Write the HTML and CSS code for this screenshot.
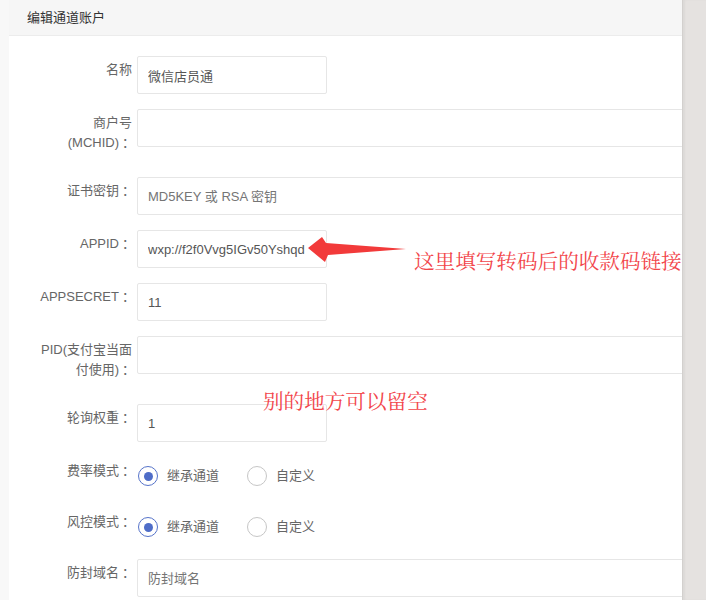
FILE: index.html
```html
<!DOCTYPE html>
<html lang="zh-CN">
<head>
<meta charset="utf-8">
<title>编辑通道账户</title>
<link rel="stylesheet" href="styles.css">
</head>
<body>
<div class="page">
  <div class="strip"></div>
  <div class="panel">
    <div class="panel-head">编辑通道账户</div>
    <form class="form">
      <div class="row">
        <label class="label">名称</label>
        <input class="input short" type="text" value="微信店员通">
      </div>
      <div class="row">
        <label class="label"><span>商户号</span> <span>(MCHID)<span class="colon">：</span></span></label>
        <input class="input wide" type="text" value="">
      </div>
      <div class="row">
        <label class="label">证书密钥<span class="colon">：</span></label>
        <input class="input wide" type="text" placeholder="MD5KEY 或 RSA 密钥">
      </div>
      <div class="row">
        <label class="label">APPID<span class="colon">：</span></label>
        <input class="input short" type="text" value="wxp://f2f0Vvg5IGv50Yshqd">
      </div>
      <div class="row">
        <label class="label">APPSECRET<span class="colon">：</span></label>
        <input class="input short" type="text" value="11">
      </div>
      <div class="row">
        <label class="label"><span>PID(支付宝当面</span><span>付使用)<span class="colon">：</span></span></label>
        <input class="input wide" type="text" value="">
      </div>
      <div class="row">
        <label class="label">轮询权重<span class="colon">：</span></label>
        <input class="input short" type="text" value="1">
      </div>
      <div class="row">
        <label class="label">费率模式<span class="colon">：</span></label>
        <div class="radios">
          <span class="radio on"></span><span class="radio-text">继承通道</span>
          <span class="radio"></span><span class="radio-text">自定义</span>
        </div>
      </div>
      <div class="row">
        <label class="label">风控模式<span class="colon">：</span></label>
        <div class="radios">
          <span class="radio on"></span><span class="radio-text">继承通道</span>
          <span class="radio"></span><span class="radio-text">自定义</span>
        </div>
      </div>
      <div class="row">
        <label class="label">防封域名<span class="colon">：</span></label>
        <input class="input wide" type="text" placeholder="防封域名">
      </div>
    </form>
    <svg class="arrow" width="110" height="40" viewBox="0 0 110 40">
      <polygon points="0,12 14,1 18,7 98,13 20,19 17,26" fill="#f23a3a"/>
    </svg>
    <div class="note note-1">这里填写转码后的收款码链接</div>
    <div class="note note-2">别的地方可以留空</div>
  </div>
  <div class="side"></div>
</div>
</body>
</html>
```
FILE: styles.css
```css
html, body {
  margin: 0;
  padding: 0;
}
body {
  width: 706px;
  height: 600px;
  overflow: hidden;
  font-family: "Liberation Sans", "Noto Sans CJK SC", sans-serif;
  font-size: 13px;
  color: #333;
  background: #fff;
}
.page {
  display: grid;
  grid-template-columns: 9px 673px 1fr;
  height: 600px;
}
.strip {
  background: #f8f8f8;
}
.panel {
  position: relative;
  overflow: hidden;
  background: #fff;
}
.side {
  background: #e5e2e0;
  border-left: 1px solid #d3d0ce;
  box-shadow: inset 2px 0 2px rgba(0,0,0,0.04);
}
.panel-head {
  height: 35px;
  line-height: 35px;
  padding-left: 18px;
  background: #f6f6f6;
  border-bottom: 1px solid #ececec;
  color: #333;
}
.form {
  padding: 20px 0 0 23px;
}
.row {
  display: flex;
  align-items: flex-start;
  gap: 5px;
  margin-bottom: 15px;
}
.label {
  width: 100px;
  flex: none;
  text-align: right;
  line-height: 20px;
  padding: 4px 0 9px;
  color: #666;
}
.colon {
  position: relative;
  left: 3px;
}
.input {
  box-sizing: border-box;
  height: 38px;
  border: 1px solid #e6e6e6;
  border-radius: 2px;
  padding: 0 10px;
  font-family: "Liberation Sans", "Noto Sans CJK SC", sans-serif;
  font-size: 13px;
  color: #555;
  background: #fff;
  outline: none;
  flex: none;
}
.input::placeholder {
  color: #757575;
}
.short {
  width: 190px;
}
.wide {
  width: 620px;
}
.radios {
  display: flex;
  align-items: center;
  padding: 9px 0 7px 1px;
}
.radio {
  box-sizing: border-box;
  width: 20px;
  height: 20px;
  border-radius: 50%;
  border: 1.5px solid #c6c6c6;
  background: #fff;
  position: relative;
  flex: none;
}
.radio.on {
  border-color: #5673c9;
}
.radio.on::after {
  content: "";
  position: absolute;
  left: 50%;
  top: 50%;
  width: 9px;
  height: 9px;
  margin: -4.5px 0 0 -4.5px;
  border-radius: 50%;
  background: #4f6dc8;
}
.radio-text {
  margin-left: 9px;
  margin-right: 28px;
  color: #666;
  line-height: 20px;
}
.arrow {
  position: absolute;
  left: 299px;
  top: 236px;
}
.note {
  position: absolute;
  font-family: "Noto Serif CJK SC", "AR PL UMing CN", "Noto Sans CJK SC", serif;
  font-size: 20.6px;
  line-height: 24px;
  color: #f2454a;
  white-space: nowrap;
}
.note-1 {
  left: 405px;
  top: 248px;
}
.note-2 {
  left: 254px;
  top: 388px;
}
```
